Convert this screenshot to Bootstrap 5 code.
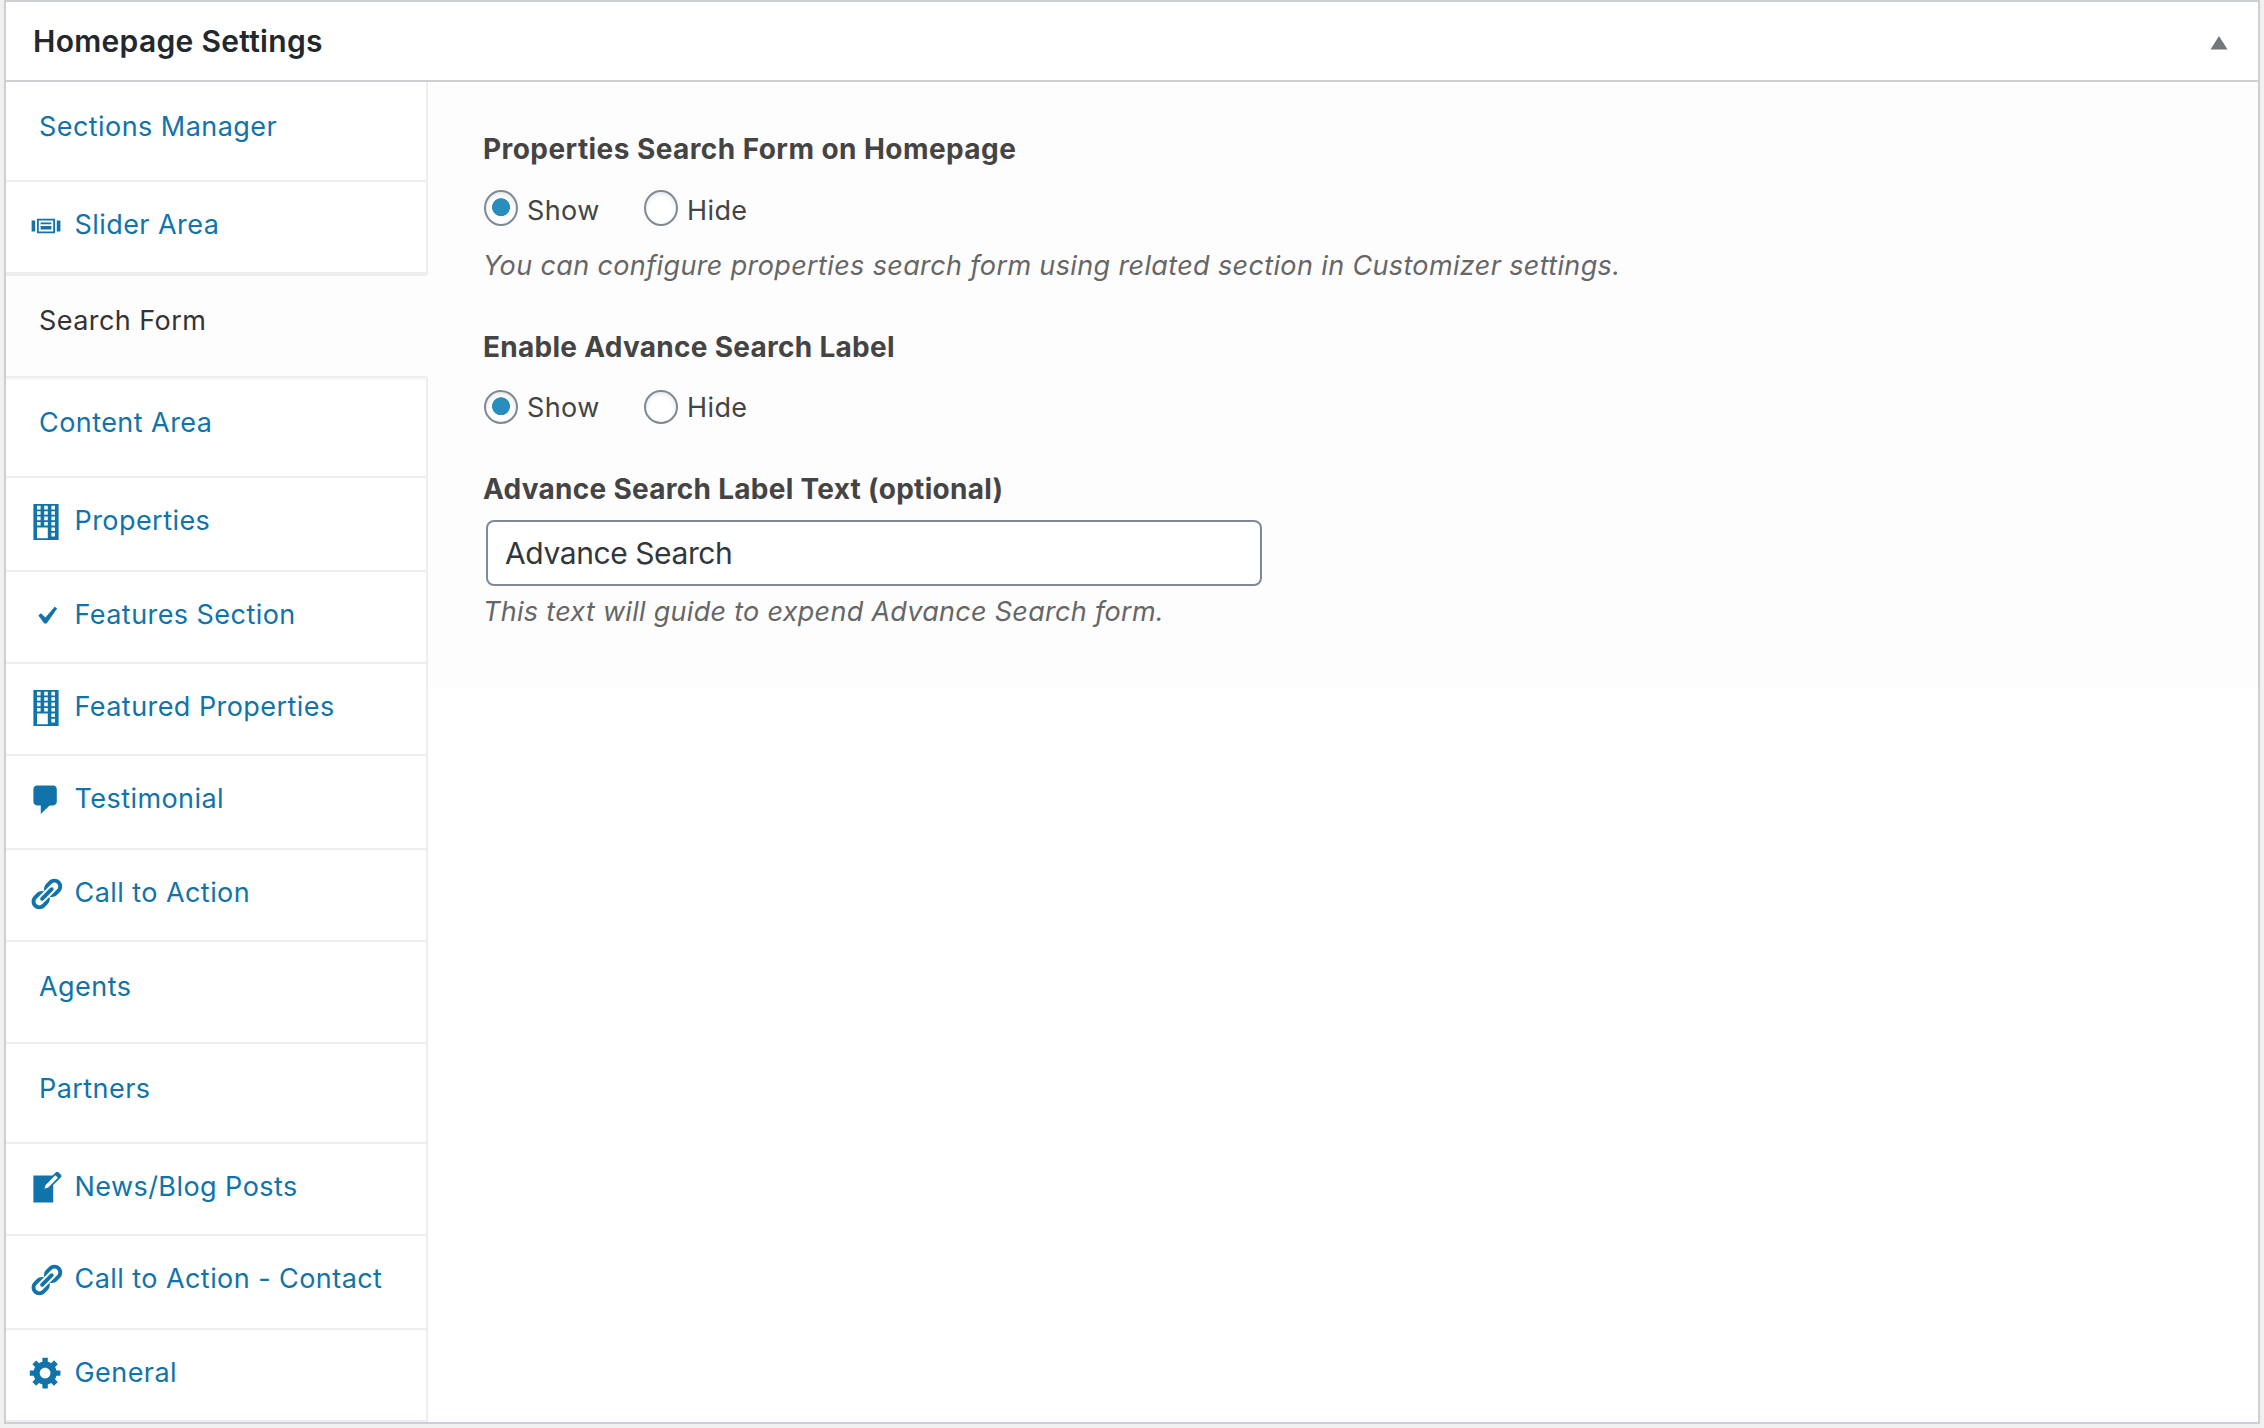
<!DOCTYPE html>
<html lang="en">
<head>
<meta charset="utf-8">
<meta name="viewport" content="width=device-width, initial-scale=1">
<title>Homepage Settings</title>
<link href="https://cdn.jsdelivr.net/npm/bootstrap@5.3.0/dist/css/bootstrap.min.css" rel="stylesheet">
<style>
  body { background: #f1f1f1; font-family: Inter, "Liberation Sans", sans-serif; font-size: 27px; line-height: 36px; color: #444; overflow: hidden; }
  .postbox { margin: 0 4px; height: 1424px; border: 2px solid #ccd0d4; border-radius: 0; box-shadow: 0 2px 2px rgba(0,0,0,.04); }
  .postbox-head { height: 80px; padding: 0 30px 0 27px; border-bottom: 2px solid #ccd0d4; border-radius: 0 !important; background: #fff; }
  .postbox-head h2 { font-size: 30px; font-weight: 600; line-height: 78px; letter-spacing: .3px; color: #23282d; }
  .tabs { width: 422px; }
  .tabs .nav-link { height: 92px; padding: 25px 0 0 22px; border: 0; border-bottom: 2px solid #eee; border-right: 2px solid #eee; border-radius: 0; color: #1073aa; background: #fff; letter-spacing: .44px; line-height: 36px; white-space: nowrap; }
  .tabs .nav-link svg { width: 36px; height: 36px; margin: .5px 10.5px 0 0; fill: #1073aa; flex: none; }
  .tabs .text-tab { height: 100px; padding: 27px 0 0 33px; }
  .tabs .h94 { height: 94px; }
  .tabs .h102 { height: 102px; }
  .tabs .nav-link.active { height: 104px; border-top: 2px solid #eee; border-right-color: #fdfdfd; background: #fdfdfd; color: #333; box-shadow: none; }
  .tabs .active + .nav-link { box-shadow: inset 0 2px 0 #f7f7f7; }
  .panel-box { height: 606px; background: #fdfdfd; padding: 49px 0 0 56px; }
  .field-label { font-size: 28px; font-weight: 700; letter-spacing: .43px; line-height: 36px; margin: 0 0 0 -1px; }
  .field-label.tight { letter-spacing: .28px; }
  .hint { font-style: italic; color: #666; letter-spacing: .36px; margin: 0 0 0 -1px; }
  .hint.tight { letter-spacing: .29px; }
  .radios { gap: 44px; letter-spacing: .4px; }
  .radios.first { margin: 23px 0 19px; }
  .radios.second { margin: 25px 0 45px; }
  .radios .form-check-input { width: 34px; height: 36px; margin: 0 9px 0 0; border: 2px solid #7e8993; background: #fff; box-shadow: inset 0 2px 4px rgba(0,0,0,.1); }
  .radios .form-check-input:checked { background: radial-gradient(circle at 50% 47.5%, #298dbd 8.6px, #fff0 9.3px) #fff; border-color: #7e8993; }
  .radios.second .form-check-input { height: 34px; }
  .radios.first span { padding-top: 3px; }
  .radio-show { width: 116px; }
  .text-field { width: 776px; height: 66px; margin: 13px 0 8px 2px; padding: 0 17px; border: 2px solid #7e8993; border-radius: 8px; font-size: 30px; letter-spacing: -.41px; color: #32373c; background: #fff; }
</style>
<script defer src="https://cdn.jsdelivr.net/npm/bootstrap@5.3.0/dist/js/bootstrap.bundle.min.js"></script>
</head>
<body>
<svg class="d-none" xmlns="http://www.w3.org/2000/svg">
  <symbol id="i-slides" viewBox="0 0 20 20"><path d="M5 14V6h10v8H5zm-3-1V7h2v6H2zm4-6v6h8V7H6zm10 0h2v6h-2V7zm-3 2V8H7v1h6zm0 3v-2H7v2h6z" fill-rule="evenodd"/></symbol>
  <symbol id="i-building" viewBox="0 0 20 20"><path fill-rule="evenodd" d="M3 20V0h14v20H3zM5 1v2h2V1H5zm4 0v2h2V1H9zm4 0v2h2V1h-2zM5 4v2h2V4H5zm4 0v2h2V4H9zm4 0v2h2V4h-2zM5 7v2h2V7H5zm4 0v2h2V7H9zm4 0v2h2V7h-2zM5 10v2h2v-2H5zm4 0v2h2v-2H9zm4 0v2h2v-2h-2zm0 3v2h2v-2h-2zm-8 0v6h6v-6H5zm8 3v2h2v-2h-2z"/></symbol>
  <symbol id="i-yes" viewBox="0 0 20 20"><path d="M14.83 4.89l1.34.94-5.81 8.38H9.02L5.78 9.67l1.34-1.25 2.57 2.4z"/></symbol>
  <symbol id="i-comment" viewBox="0 0 20 20"><path d="M5 2h9c1.1 0 2 .9 2 2v7c0 1.1-.9 2-2 2h-2l-4.9 4.8V13H5c-1.1 0-2-.9-2-2V4c0-1.1.9-2 2-2z"/></symbol>
  <symbol id="i-link" viewBox="0 0 20 20"><path d="M17.74 2.76c1.68 1.69 1.68 4.41 0 6.1l-1.53 1.52c-1.12 1.12-2.7 1.47-4.14 1.09l2.62-2.61.76-.77.76-.76c.84-.84.84-2.2 0-3.04-.84-.85-2.2-.85-3.04 0l-.77.76-3.38 3.38c-.37-1.44-.02-3.02 1.1-4.14l1.52-1.53c1.69-1.68 4.42-1.68 6.1 0zM8.59 13.43l5.34-5.34c.42-.42.42-1.1 0-1.52-.44-.43-1.13-.39-1.53 0l-5.33 5.34c-.42.42-.42 1.1 0 1.52.44.43 1.13.39 1.52 0zm-.76 2.29l4.14-4.15c.38 1.44.03 3.02-1.09 4.14l-1.52 1.53c-1.69 1.68-4.41 1.68-6.1 0-1.68-1.68-1.68-4.42 0-6.1l1.53-1.52c1.12-1.12 2.7-1.47 4.14-1.1l-4.14 4.15c-.85.84-.85 2.2 0 3.05.84.84 2.2.84 3.04 0z"/></symbol>
  <symbol id="i-write" viewBox="0 0 20 20"><path d="M16.89 1.2l1.41 1.41c.39.39.39 1.02 0 1.41L14 8.33V18H3V3h10.67l1.8-1.8c.4-.39 1.03-.4 1.42 0zm-5.66 8.48l5.37-5.36-1.42-1.42-5.36 5.37-.71 2.12z"/></symbol>
  <symbol id="i-gear" viewBox="0 0 20 20"><path transform="translate(0 -1)" d="M18 12h-2.18c-.17.7-.44 1.35-.81 1.93l1.54 1.54-2.1 2.1-1.54-1.54c-.58.36-1.23.63-1.91.79V19H8v-2.18c-.68-.16-1.33-.43-1.91-.79l-1.54 1.54-2.12-2.12 1.54-1.54c-.36-.58-.63-1.23-.79-1.91H1V9.03h2.17c.16-.7.44-1.35.8-1.94L2.43 5.55l2.1-2.1 1.54 1.54c.58-.37 1.24-.64 1.93-.81V2h3v2.18c.68.16 1.33.43 1.91.79l1.54-1.54 2.12 2.12-1.54 1.54c.36.59.64 1.24.8 1.94H18V12zm-8.5 1.5c1.66 0 3-1.34 3-3s-1.34-3-3-3-3 1.34-3 3 1.34 3 3 3z"/></symbol>
</svg>

<section class="postbox card">
  <header class="postbox-head card-header d-flex justify-content-between align-items-center">
    <h2 class="m-0">Homepage Settings</h2>
    <svg width="18" height="14" viewBox="0 0 18 14" class="mt-1"><path d="M9 0l8.5 13.5H.5z" fill="#72777c"/></svg>
  </header>
  <div class="d-flex flex-grow-1 align-items-start">
    <nav class="tabs nav flex-column flex-nowrap flex-shrink-0">
      <a class="nav-link d-flex align-items-start text-tab" href="#">Sections Manager</a>
      <a class="nav-link d-flex align-items-start" href="#"><svg><use href="#i-slides"/></svg>Slider Area</a>
      <a class="nav-link d-flex align-items-start text-tab active" href="#">Search Form</a>
      <a class="nav-link d-flex align-items-start text-tab" href="#">Content Area</a>
      <a class="nav-link d-flex align-items-start h94" href="#"><svg><use href="#i-building"/></svg>Properties</a>
      <a class="nav-link d-flex align-items-start" href="#"><svg><use href="#i-yes"/></svg>Features Section</a>
      <a class="nav-link d-flex align-items-start" href="#"><svg><use href="#i-building"/></svg>Featured Properties</a>
      <a class="nav-link d-flex align-items-start h94" href="#"><svg><use href="#i-comment"/></svg>Testimonial</a>
      <a class="nav-link d-flex align-items-start" href="#"><svg><use href="#i-link"/></svg>Call to Action</a>
      <a class="nav-link d-flex align-items-start text-tab h102" href="#">Agents</a>
      <a class="nav-link d-flex align-items-start text-tab" href="#">Partners</a>
      <a class="nav-link d-flex align-items-start" href="#"><svg><use href="#i-write"/></svg>News/Blog Posts</a>
      <a class="nav-link d-flex align-items-start h94" href="#"><svg><use href="#i-link"/></svg>Call to Action - Contact</a>
      <a class="nav-link d-flex align-items-start" href="#"><svg><use href="#i-gear"/></svg>General</a>
    </nav>
    <form class="panel-box flex-grow-1">
      <p class="field-label">Properties Search Form on Homepage</p>
      <div class="radios first d-flex">
        <label class="radio-show d-flex"><input class="form-check-input" type="radio" name="form" checked><span>Show</span></label>
        <label class="d-flex"><input class="form-check-input" type="radio" name="form"><span>Hide</span></label>
      </div>
      <p class="hint mb-0">You can configure properties search form using related section in Customizer settings.</p>
      <p class="field-label tight" style="margin-top:45px">Enable Advance Search Label</p>
      <div class="radios second d-flex">
        <label class="radio-show d-flex"><input class="form-check-input" type="radio" name="label" checked><span>Show</span></label>
        <label class="d-flex"><input class="form-check-input" type="radio" name="label"><span>Hide</span></label>
      </div>
      <p class="field-label tight">Advance Search Label Text (optional)</p>
      <input class="text-field form-control" type="text" value="Advance Search">
      <p class="hint tight">This text will guide to expend Advance Search form.</p>
    </form>
  </div>
</section>
</body>
</html>
